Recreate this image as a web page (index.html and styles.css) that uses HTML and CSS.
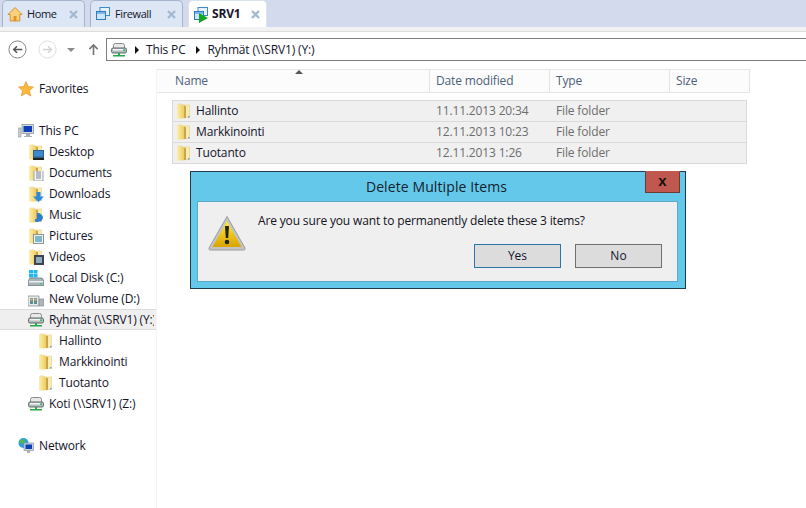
FILE: index.html
```html
<!DOCTYPE html>
<html lang="en">
<head>
<meta charset="utf-8">
<title>SRV1</title>
<link rel="stylesheet" href="styles.css">
</head>
<body>
<svg class="defs" width="0" height="0">
  <defs>
    <linearGradient id="fg" x1="0" y1="0" x2="1" y2="0"><stop offset="0" stop-color="#fbeeb0"/><stop offset=".5" stop-color="#f5dc80"/><stop offset="1" stop-color="#e8c65e"/></linearGradient>
    <linearGradient id="wg" x1="0" y1="0" x2="0" y2="1"><stop offset="0" stop-color="#ffe93a"/><stop offset="1" stop-color="#d9a400"/></linearGradient>
    <symbol id="folder" viewBox="0 0 16 16">
      <path d="M2 1h4l1 1h6.500v12.500H2z" fill="#f9ebb5" stroke="#e0c677" stroke-width=".5"/>
      <path d="M1 1.500h5L9 3v12l-3 .5H1z" fill="url(#fg)"/>
      <path d="M8.200 2.600L10 3.200v11.600l-1.800.5z" fill="#c9a044"/>
      <path d="M12 13h1.500v1.500H12z" fill="#5ba6dc"/>
    </symbol>
    <symbol id="vm" viewBox="0 0 16 16">
      <rect x="5" y="1.500" width="9.500" height="8" fill="#e6f2fb" stroke="#3d8ac6"/>
      <rect x="1.500" y="5.500" width="9" height="8" fill="#cfe6f7" stroke="#2f7cbc"/>
      <path d="M2 6h8v2H2z" fill="#7db9e6"/>
    </symbol>
    <symbol id="share" viewBox="0 0 16 16">
      <path d="M2.500 3.500q0-2 2-2h7q2 0 2 2v3h-11z" fill="#e9e9e9" stroke="#8a8a8a"/>
      <rect x=".5" y="6" width="15" height="5" rx="1.500" fill="#b4bcbc" stroke="#5f6a6a"/>
      <path d="M2 7h10v1.500H2z" fill="#f2f4f4"/>
      <rect x="12" y="7.500" width="2" height="1.500" fill="#35c45a"/>
      <path d="M7 11h2v2h5v1.500H2V13h5z" fill="#25a84a"/>
    </symbol>
    <symbol id="x" viewBox="0 0 9 9">
      <path d="M1 1l7 7M8 1L1 8" fill="none" stroke="#a3b9d0" stroke-width="2.300"/>
    </symbol>
  </defs>
</svg>

<header class="tabbar">
  <div class="tab">
    <svg class="tab-icon" viewBox="0 0 16 16"><path d="M8 1.500L1 8.500h2.200V15h9.600V8.500H15z" fill="#f8d27a" stroke="#d9902f"/><path d="M6.500 15v-5h3v5z" fill="#e0932e"/></svg>
    <span class="tab-label">Home</span><svg class="tab-close"><use href="#x"/></svg>
  </div>
  <div class="tab tab-firewall">
    <svg class="tab-icon"><use href="#vm"/></svg>
    <span class="tab-label">Firewall</span><svg class="tab-close"><use href="#x"/></svg>
  </div>
  <div class="tab tab-active">
    <span class="tab-icon-wrap">
      <svg class="tab-icon"><use href="#vm"/></svg>
      <svg class="tab-play" viewBox="0 0 9 10"><path d="M0 0l9 5-9 5z" fill="#13a622"/></svg>
    </span>
    <span class="tab-label">SRV1</span><svg class="tab-close"><use href="#x"/></svg>
  </div>
</header>
<div class="toolstrip"></div>

<nav class="navbar">
  <svg class="nav-round" viewBox="0 0 20 20"><circle cx="10" cy="10" r="9" fill="#fff" stroke="#7d7d7d"/><path d="M15 10H6M9.500 6.500L6 10l3.500 3.500" fill="none" stroke="#555" stroke-width="1.600"/></svg>
  <svg class="nav-round nav-off" viewBox="0 0 20 20"><circle cx="10" cy="10" r="9" fill="#fff" stroke="#dcdcdc"/><path d="M5 10h9M10.500 6.500L14 10l-3.500 3.500" fill="none" stroke="#d4d4d4" stroke-width="1.600"/></svg>
  <span class="nav-caret"></span>
  <svg class="nav-up" viewBox="0 0 12 14"><path d="M6 13V2M1.500 6.500L6 2l4.500 4.500" fill="none" stroke="#777" stroke-width="1.800"/></svg>
  <div class="address">
    <svg class="addr-icon"><use href="#share"/></svg>
    <span class="crumb-arrow"></span><span class="crumb">This PC</span>
    <span class="crumb-arrow"></span><span class="crumb">Ryhmät (\\SRV1) (Y:)</span>
  </div>
</nav>

<main class="explorer">
  <aside class="tree">
    <div class="node node-top node-fav">
      <svg class="ic" viewBox="0 0 16 16"><path d="M8 .5l2.200 5 5.300.5-4 3.600 1.200 5.400L8 12.200 3.300 15l1.200-5.400-4-3.600 5.300-.5z" fill="#f9b93a" stroke="#e8953a" stroke-width=".7"/></svg>
      <span>Favorites</span>
    </div>
    <div class="node node-top node-pc">
      <svg class="ic" viewBox="0 0 16 16"><rect x="0" y="5" width="3" height="9" fill="#c7cfd2" stroke="#8b9598" stroke-width=".6"/><rect x="4" y="1.500" width="11.500" height="9" fill="#d4dbe0" stroke="#8995a0" stroke-width=".8"/><rect x="5.500" y="3" width="8.500" height="6" fill="#0e3fb5"/><path d="M8 11h4v2h2v1H6v-1h2z" fill="#a9b1b6"/></svg>
      <span>This PC</span>
    </div>
    <div class="node node-sub">
      <span class="ic-stack"><svg class="ic"><use href="#folder"/></svg><svg class="badge" viewBox="0 0 11 10"><rect width="11" height="8" fill="#345f86"/><rect x="1" y="1" width="9" height="5.500" fill="#3c8ad0"/><rect y="8" width="11" height="2" fill="#222"/></svg></span>
      <span>Desktop</span>
    </div>
    <div class="node node-sub">
      <span class="ic-stack"><svg class="ic"><use href="#folder"/></svg><svg class="badge" viewBox="0 0 11 10"><rect x="1" y="-2" width="9" height="12" fill="#f4f6f8" stroke="#9ba3ad"/><path d="M3 1h5M3 3h5M3 5h5M3 7h5" stroke="#77808a"/></svg></span>
      <span>Documents</span>
    </div>
    <div class="node node-sub">
      <span class="ic-stack"><svg class="ic"><use href="#folder"/></svg><svg class="badge" viewBox="0 0 11 10"><path d="M3.500 0h4v4.500H11L5.500 10 0 4.500h3.500z" fill="#2a8ae0"/></svg></span>
      <span>Downloads</span>
    </div>
    <div class="node node-sub">
      <span class="ic-stack"><svg class="ic"><use href="#folder"/></svg><svg class="badge" viewBox="0 0 11 10"><path d="M4 0h2q4 2 4 5-1 4-7 4-2-1-1-2.500 1-1 2-.5z" fill="#2a7fcf"/></svg></span>
      <span>Music</span>
    </div>
    <div class="node node-sub">
      <span class="ic-stack"><svg class="ic"><use href="#folder"/></svg><svg class="badge" viewBox="0 0 11 10"><rect x=".5" y=".5" width="10" height="9" fill="#eef2f2" stroke="#8b9598"/><rect x="2" y="2" width="7" height="6" fill="#7fb6c9"/></svg></span>
      <span>Pictures</span>
    </div>
    <div class="node node-sub">
      <span class="ic-stack"><svg class="ic"><use href="#folder"/></svg><svg class="badge" viewBox="0 0 11 10"><rect x="1" width="10" height="10" fill="#3b4450"/><rect x="3" y="2" width="6" height="6" fill="#8ea9c0"/></svg></span>
      <span>Videos</span>
    </div>
    <div class="node node-sub">
      <svg class="ic" viewBox="0 0 16 16"><path d="M1 0h4v3.500H1zM5.500 0h4v3.500h-4zM1 4h4v3.500H1zM5.500 4h4v3.500h-4z" fill="#21b8f2"/><path d="M2 8h12l2 3v4.500H0V11z" fill="#a9b4ba" stroke="#66727a" stroke-width=".7"/><path d="M1 11h14v1.500H1z" fill="#e9eeef"/><rect x="12" y="13" width="2" height="1.300" fill="#40c860"/></svg>
      <span>Local Disk (C:)</span>
    </div>
    <div class="node node-sub">
      <svg class="ic" viewBox="0 0 16 16"><path d="M0 5h11v10H0z" fill="#e6eaec" stroke="#7b858b" stroke-width=".7"/><path d="M2 7h3v6H2zM6 7h3v6H6z" fill="#5a8f8d"/><circle cx="3.500" cy="8.500" r="1.300" fill="#d9a87a"/><circle cx="7.500" cy="8.500" r="1.300" fill="#d9a87a"/><rect x="11" y="8" width="5" height="7" fill="#aeb6bb" stroke="#7b858b" stroke-width=".6"/></svg>
      <span>New Volume (D:)</span>
    </div>
    <div class="node node-sub node-selected">
      <svg class="ic"><use href="#share"/></svg>
      <span class="clip">Ryhmät (\\SRV1) (Y:)</span>
    </div>
    <div class="node node-leaf"><svg class="ic"><use href="#folder"/></svg><span>Hallinto</span></div>
    <div class="node node-leaf"><svg class="ic"><use href="#folder"/></svg><span>Markkinointi</span></div>
    <div class="node node-leaf"><svg class="ic"><use href="#folder"/></svg><span>Tuotanto</span></div>
    <div class="node node-sub">
      <svg class="ic"><use href="#share"/></svg>
      <span>Koti (\\SRV1) (Z:)</span>
    </div>
    <div class="node node-top node-net">
      <svg class="ic" viewBox="0 0 16 16"><circle cx="5.500" cy="5" r="5" fill="#2f9fe0"/><path d="M2 2l4-1 1 3-3 2-2-1zM7 7l2 1-1 2-2-1z" fill="#4fb848"/><rect x="6" y="5" width="9.500" height="7.500" fill="#cdd5da" stroke="#87929a" stroke-width=".7"/><rect x="7.500" y="6.500" width="6.500" height="4.500" fill="#0e3fb5"/><path d="M9 12.500h3V15H9z" fill="#a9b1b6"/></svg>
      <span>Network</span>
    </div>
  </aside>

  <section class="files">
    <div class="columns">
      <div class="col col-name">Name<span class="sort"></span></div>
      <div class="col col-date">Date modified</div>
      <div class="col col-type">Type</div>
      <div class="col col-size">Size</div>
    </div>
    <div class="rows">
      <div class="row">
        <div class="cell-name"><svg class="ic"><use href="#folder"/></svg><span>Hallinto</span></div>
        <div class="cell-date">11.11.2013 20:34</div>
        <div class="cell-type">File folder</div>
      </div>
      <div class="row">
        <div class="cell-name"><svg class="ic"><use href="#folder"/></svg><span>Markkinointi</span></div>
        <div class="cell-date">12.11.2013 10:23</div>
        <div class="cell-type">File folder</div>
      </div>
      <div class="row">
        <div class="cell-name"><svg class="ic"><use href="#folder"/></svg><span>Tuotanto</span></div>
        <div class="cell-date">12.11.2013 1:26</div>
        <div class="cell-type">File folder</div>
      </div>
    </div>
  </section>
</main>

<div class="dialog" role="dialog">
  <div class="dialog-title">Delete Multiple Items</div>
  <button class="dialog-close" type="button">x</button>
  <div class="dialog-panel">
    <div class="dialog-msg">
      <svg class="warn" viewBox="0 0 38 36">
        <path d="M19 1.500L37 33q.5 2-1.500 2h-33q-2 0-1.500-2z" fill="#c4c4c4" stroke="#9b9b9b"/>
        <path d="M19 6L33.500 32h-29z" fill="url(#wg)"/>
        <path d="M17 11h4l-.8 12h-2.400z" fill="#222"/>
        <circle cx="19" cy="27" r="2.300" fill="#222"/>
      </svg>
      <p class="dialog-text">Are you sure you want to permanently delete these 3 items?</p>
    </div>
    <div class="dialog-actions">
      <button class="btn btn-default" type="button">Yes</button>
      <button class="btn" type="button">No</button>
    </div>
  </div>
</div>
</body>
</html>
```
FILE: styles.css
```css
* { box-sizing: border-box; }
html, body { margin: 0; padding: 0; }
body {
  position: relative;
  width: 806px;
  height: 508px;
  overflow: hidden;
  background: #fff;
  color: #14142a;
  font: 12px/16px "Open Sans", "Noto Sans", sans-serif;
  letter-spacing: -0.15px;
}
.defs { position: absolute; }

.tabbar {
  display: flex;
  height: 27px;
  padding-left: 2px;
  gap: 5px;
  background: #d4daed;
}
.tab {
  display: flex;
  align-items: center;
  width: 83px;
  height: 27px;
  padding: 0 6px 0 4px;
  background: #dce6f4;
  border: 1px solid #a5b6cc;
  border-bottom: 0;
  border-radius: 5px 5px 0 0;
}
.tab-firewall { width: 93px; }
.tab-active { width: 79px; background: #fff; border-color: #dbe3ef; padding-right: 6px; }
.tab-icon { width: 16px; height: 16px; flex: none; }
.tab-icon-wrap { position: relative; display: flex; width: 16px; height: 16px; flex: none; }
.tab-play { position: absolute; left: 6px; top: 7px; width: 9px; height: 10px; }
.tab-label { margin-left: 4px; flex: 1; white-space: nowrap; color: #14142a; font-size: 11px; letter-spacing: -0.4px; }
.tab-active .tab-label { font-size: 12px; font-weight: 700; letter-spacing: -0.2px; margin-left: 3px; }
.tab-close { width: 9px; height: 9px; flex: none; }

.toolstrip { height: 5px; background: #f2f2f2; border-bottom: 1px solid #dcdcdc; }

.navbar {
  display: flex;
  align-items: center;
  height: 23px;
  margin-top: 6px;
  padding-left: 8px;
}
.nav-round { width: 19px; height: 19px; flex: none; }
.nav-off { margin-left: 11px; }
.nav-caret {
  width: 0; height: 0;
  margin-left: 10px;
  border: 4px solid transparent;
  border-top: 4px solid #8a8a8a;
  border-bottom: 0;
}
.nav-up { width: 11px; height: 13px; margin-left: 13px; flex: none; }
.address {
  display: flex;
  align-items: center;
  flex: 1;
  height: 23px;
  margin-left: 7px;
  border: 1px solid #7f7f7f;
  border-right: 0;
  padding-left: 4px;
  background: #fff;
}
.addr-icon { width: 16px; height: 16px; flex: none; }
.crumb-arrow {
  width: 0; height: 0;
  margin: 0 7px 0 8px;
  border-left: 4px solid #111;
  border-top: 4px solid transparent;
  border-bottom: 4px solid transparent;
}
.crumb { white-space: nowrap; }
.crumb + .crumb-arrow { margin-left: 10px; margin-right: 8px; }

.explorer { display: flex; height: 447px; padding-top: 8px; }
.tree {
  width: 157px;
  flex: none;
  padding-top: 9px;
  border-right: 1px solid #f4f4f4;
}
.node { display: flex; align-items: center; height: 21px; white-space: nowrap; }
.node-top { padding-left: 18px; }
.node-top .ic { margin-right: 5px; }
.node-pc { margin-top: 21px; }
.node-net { margin-top: 21px; }
.node-sub { padding-left: 28px; }
.node-sub .ic { margin-right: 5px; }
.node-sub .ic-stack { margin-right: 5px; }
.ic-stack .ic { margin: 0; }
.node-leaf { padding-left: 38px; }
.node-leaf .ic { margin-right: 5px; }
.node-selected {
  background: #efefef;
  border-top: 1px solid #dcdcdc;
  border-bottom: 1px solid #dcdcdc;
}
.clip { overflow: hidden; width: 105px; }
.ic { width: 16px; height: 16px; flex: none; display: block; }
.ic-stack { position: relative; display: block; width: 16px; height: 16px; flex: none; }
.badge { position: absolute; right: 0; bottom: 0; width: 11px; height: 10px; }

.files { flex: 1; min-width: 0; }
.columns {
  display: flex;
  width: 593px;
  height: 24px;
  background: #fcfcfc;
  border-top: 1px solid #e5e5e5;
  border-bottom: 1px solid #e5e5e5;
  color: #4c607a;
}
.col {
  position: relative;
  display: flex;
  align-items: center;
  padding-left: 18px;
  border-right: 1px solid #e5e5e5;
}
.col-name { width: 273px; }
.col-date { width: 120px; padding-left: 6px; }
.col-type { width: 120px; padding-left: 6px; }
.col-size { width: 80px; padding-left: 6px; }
.sort {
  position: absolute;
  left: 138px;
  top: 0;
  width: 0; height: 0;
  border: 4px solid transparent;
  border-top: 0;
  border-bottom: 4px solid #555;
}
.rows {
  width: 575px;
  margin: 7px 0 0 15px;
  background: #f0f0f0;
  border: 1px solid #dadada;
}
.row {
  display: flex;
  align-items: center;
  height: 21px;
  border-top: 1px solid #dadada;
  color: #6d6d6d;
}
.row:first-child { height: 20px; border-top: 0; }
.cell-name { display: flex; align-items: center; width: 263px; padding-left: 3px; gap: 4px; color: #14142a; }
.cell-date { width: 120px; }
.cell-type { width: 120px; }

.dialog {
  position: absolute;
  left: 190px;
  top: 171px;
  width: 496px;
  height: 118px;
  padding: 30px 8px 6px 7px;
  background: #64c8ea;
  border: 1px solid #1f3a4a;
}
.dialog-title {
  position: absolute;
  left: 0; right: 0; top: 6px;
  text-align: center;
  font-size: 14px;
  line-height: 18px;
  letter-spacing: 0.1px;
  color: #14222c;
  padding-right: 3px;
}
.dialog-close {
  position: absolute;
  right: 5px;
  top: -1px;
  width: 35px;
  height: 22px;
  padding: 0 0 3px;
  background: #c0584f;
  border: 1px solid #6e3a36;
  border-top-color: #c0584f;
  color: #111;
  font: 700 15px/16px "Liberation Sans", sans-serif;
}
.dialog-panel {
  height: 79px;
  padding: 11px 15px 0 10px;
  background: #efefef;
  box-shadow: 0 0 0 1px #5ba8c8;
}
.dialog-msg { display: flex; align-items: flex-start; height: 31px; }
.warn { width: 38px; height: 36px; flex: none; margin-top: 2px; }
.dialog-text { margin: 0 0 0 12px; color: #12121c; }
.dialog-actions { display: flex; justify-content: flex-end; gap: 14px; }
.btn {
  width: 87px;
  height: 24px;
  padding: 0;
  background: #dcdcdc;
  border: 1px solid #707070;
  color: #14142a;
  font: inherit;
}
.btn-default { border-color: #2a76ac; }
```
